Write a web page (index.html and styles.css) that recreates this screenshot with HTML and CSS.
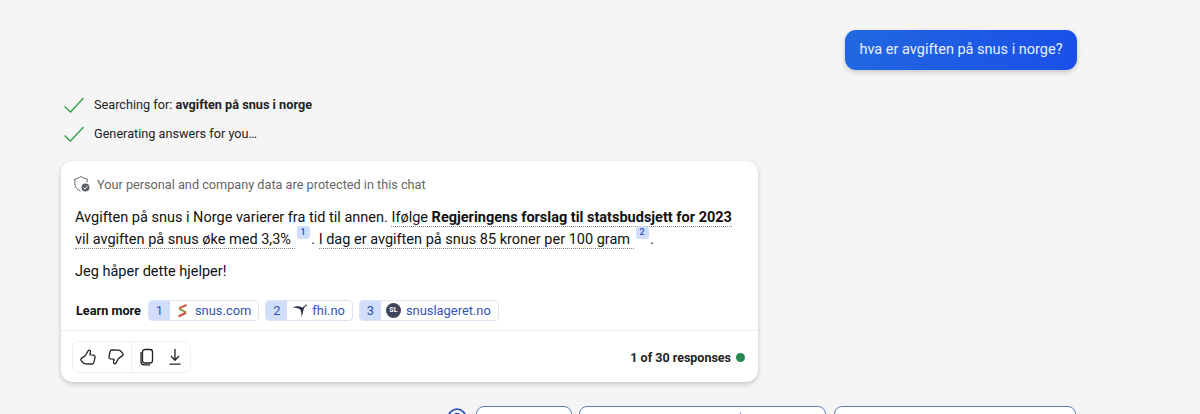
FILE: index.html
```html
<!DOCTYPE html>
<html>
<head>
    <title>Chat</title>
    <link rel="stylesheet" href="styles.css">
</head>
<body>
    <div class="chat">
        <div class="user-row">
            <div class="bubble">hva er avgiften på snus i norge?</div>
        </div>

        <div class="status">
            <svg class="check" viewBox="0 0 22 16"><path d="M1.5 9.5 L7.5 15 L20.5 1"/></svg>
            <span>Searching for: <b>avgiften på snus i norge</b></span>
        </div>
        <div class="status">
            <svg class="check" viewBox="0 0 22 16"><path d="M1.5 9.5 L7.5 15 L20.5 1"/></svg>
            <span>Generating answers for you…</span>
        </div>

        <div class="card">
            <div class="privacy">
                <svg class="shield" viewBox="0 0 18 18">
                    <path class="shield-line" d="M8 1.5 C6 3 4 3.8 1.8 4 V8.5 C1.8 12 4 14.6 7.5 16"/>
                    <path class="shield-line" d="M8 1.5 C10 3 12 3.8 14.2 4 V7.5"/>
                    <circle class="shield-dot" cx="12.5" cy="12.5" r="4.5"/>
                    <path class="shield-tick" d="M10.5 12.6 L12 14 L14.5 11.2"/>
                </svg>
                <span>Your personal and company data are protected in this chat</span>
            </div>

            <p class="answer">Avgiften på snus i Norge varierer fra tid til annen. <span class="cited">Ifølge <b>Regjeringens forslag til statsbudsjett for 2023</b> vil avgiften på snus øke med 3,3%&nbsp;</span><sup class="ref">1</sup> . <span class="cited">I dag er avgiften på snus 85 kroner per 100 gram&nbsp;</span><sup class="ref">2</sup> .</p>
            <p class="answer closing">Jeg håper dette hjelper!</p>

            <div class="learn">
                <b class="learn-label">Learn more</b>
                <a class="source">
                    <span class="num">1</span>
                    <span class="site">
                        <svg class="favicon" viewBox="0 0 14 16">
                            <path d="M11 2 L3.5 5.2" fill="none" stroke="#d0603f" stroke-width="2.2"/>
                            <path d="M3.5 5.6 L10.5 9.4" fill="none" stroke="#9a9c4c" stroke-width="2.2"/>
                            <path d="M10.5 9.8 L3 13.6" fill="none" stroke="#c4543f" stroke-width="2.2"/>
                        </svg>
                        snus.com
                    </span>
                </a>
                <a class="source">
                    <span class="num">2</span>
                    <span class="site">
                        <svg class="favicon wide" viewBox="0 0 16 14">
                            <path d="M0.5 3.5 C4 1.5 8 1.5 11 3.5 C12 2.5 13 1.5 14 1 L14.5 2 C13 3.5 12.5 5 12 7 C11.5 9.5 11 11.5 10 13.5 C10.2 10 10 7 8.5 5 C6.5 3.8 3.5 3.2 0.5 3.5 Z" fill="#2b3245"/>
                            <circle cx="15" cy="0.9" r="0.9" fill="#2b3245"/>
                        </svg>
                        fhi.no
                    </span>
                </a>
                <a class="source">
                    <span class="num">3</span>
                    <span class="site">
                        <span class="sl-logo">SL</span>
                        snuslageret.no
                    </span>
                </a>
            </div>

            <div class="card-foot">
                <div class="actions">
                    <div class="action-group">
                        <svg class="act" viewBox="0 0 18 18"><path d="M6.5 7.5 L9 3 C9.5 1.6 11.6 1.9 11.4 3.6 L11 6.8 L14.6 7.2 C15.8 7.4 16.2 8.4 16 9.4 L15 14.2 C14.8 15.4 13.8 16 12.8 16 L6.5 15.8 C5.4 15.7 4.8 15.4 4.2 14.8 L2.2 12.6 C1.6 12 1.6 11.2 2.2 10.6 Z"/></svg>
                        <svg class="act" viewBox="0 0 18 18"><path d="M11.5 10.5 L9 15 C8.5 16.4 6.4 16.1 6.6 14.4 L7 11.2 L3.4 10.8 C2.2 10.6 1.8 9.6 2 8.6 L3 3.8 C3.2 2.6 4.2 2 5.2 2 L11.5 2.2 C12.6 2.3 13.2 2.6 13.8 3.2 L15.8 5.4 C16.4 6 16.4 6.8 15.8 7.4 Z"/></svg>
                    </div>
                    <div class="action-group">
                        <svg class="act" viewBox="0 0 18 18"><rect x="4.5" y="1.5" width="10" height="13.5" rx="2.5"/><path d="M3 4 V14 C3 15.6 4.4 16.8 6 16.8 H12"/></svg>
                        <svg class="act" viewBox="0 0 18 18"><path d="M9 1 V12 M5 8 L9 12.2 L13 8 M3.5 16.2 H14.5"/></svg>
                    </div>
                </div>
                <div class="responses">1 of 30 responses <span class="dot"></span></div>
            </div>
        </div>

        <div class="suggestions">
            <svg class="help" viewBox="0 0 20 20"><circle cx="10" cy="10" r="8.8"/><path d="M7.6 7.8 C7.8 6.2 9 5.6 10.1 5.6 C11.5 5.6 12.5 6.5 12.5 7.7 C12.5 9.4 10.1 9.5 10.1 11.4"/><circle class="help-dot" cx="10.1" cy="14" r="1"/></svg>
            <button class="pill first"></button>
            <button class="pill second"></button>
            <button class="pill third"></button>
        </div>
    </div>
</body>
</html>
```

FILE: styles.css
```css
html, body {
    margin: 0;
    height: 414px;
    overflow: hidden;
}

body {
    background: #f5f5f5;
    font-family: Roboto, Arial, sans-serif;
    color: #111;
}

.chat {
    width: 1016px;
    margin-left: 61px;
    padding-top: 30px;
}

.user-row {
    display: flex;
    justify-content: flex-end;
    margin-bottom: 20px;
}

.bubble {
    box-sizing: border-box;
    height: 40px;
    width: 232px;
    padding-top: 11px;
    text-align: center;
    border-radius: 11px;
    background: linear-gradient(100deg, #2168e0, #1a4fe8);
    box-shadow: 0 2px 5px rgba(0,0,0,0.2);
    color: #e8f0ff;
    font-size: 14.5px;
    line-height: 18px;
}

.status {
    display: flex;
    align-items: center;
    height: 29px;
    font-size: 12.7px;
    color: #222;
}

.check {
    width: 22px;
    height: 16px;
    margin: 1px 9px 0 2px;
    fill: none;
    stroke: #2e9e50;
    stroke-width: 1.3;
}

.card {
    box-sizing: border-box;
    width: 697px;
    height: 221px;
    margin-top: 13px;
    background: #fff;
    border-radius: 12px;
    box-shadow: 0 2px 5px rgba(0,0,0,0.2);
}

.privacy {
    display: flex;
    align-items: center;
    height: 18px;
    padding: 14px 0 0 12px;
    font-size: 12.7px;
    color: #666;
}

.shield {
    width: 18px;
    height: 18px;
    margin-right: 6px;
}

.shield-line {
    fill: none;
    stroke: #666;
    stroke-width: 1;
}

.shield-dot {
    fill: #5c5f66;
    stroke: #fff;
    stroke-width: 1;
}

.shield-tick {
    fill: none;
    stroke: #fff;
    stroke-width: 1;
}

.answer {
    margin: 0 14px;
    font-size: 14.5px;
    line-height: 22px;
    color: #111;
}

.answer:first-of-type {
    margin-top: 14px;
}

.closing {
    margin-top: 10px;
}

.cited {
    border-bottom: 1px dotted #888;
}

.ref {
    display: inline-block;
    box-sizing: border-box;
    min-width: 13px;
    height: 13px;
    line-height: 13px;
    margin: -3px -2px 0 2px;
    text-align: center;
    vertical-align: top;
    border-radius: 3px;
    background: #cfdefb;
    color: #2450c8;
    font-size: 9px;
    font-weight: 500;
}

.learn {
    display: flex;
    align-items: center;
    gap: 6px;
    margin: 17px 0 0 15px;
    font-size: 12.9px;
}

.learn-label {
    margin-right: 1px;
    font-size: 12.7px;
    color: #111;
}

.source {
    display: flex;
    height: 21px;
    box-sizing: border-box;
    border: 1px solid #dfe4f2;
    border-radius: 4px;
    overflow: hidden;
    color: #2f55b5;
}

.num {
    display: flex;
    align-items: center;
    justify-content: center;
    width: 21px;
    background: #d0def9;
}

.site {
    display: flex;
    align-items: center;
    gap: 5px;
    padding: 0 7px 0 5px;
}

.favicon {
    width: 15px;
    height: 16px;
}

.favicon.wide {
    width: 15px;
    height: 14px;
}

.sl-logo {
    width: 15px;
    height: 15px;
    border-radius: 50%;
    background: #3f4458;
    color: #fff;
    font-size: 7px;
    font-weight: 700;
    line-height: 15px;
    text-align: center;
}

.card-foot {
    display: flex;
    align-items: center;
    justify-content: space-between;
    height: 52px;
    margin-top: 9px;
    padding: 0 13px 0 11px;
    border-top: 1px solid #ececec;
}

.actions {
    display: flex;
    height: 30px;
    border: 1px solid #eeeeee;
    border-radius: 7px;
}

.action-group {
    display: flex;
    align-items: center;
    gap: 10px;
    padding: 0 6px;
}

.action-group + .action-group {
    border-left: 1px solid #eeeeee;
}

.act {
    width: 18px;
    height: 18px;
    fill: none;
    stroke: #222;
    stroke-width: 1.3;
}

.responses {
    display: flex;
    align-items: center;
    gap: 5px;
    font-size: 12.5px;
    font-weight: 700;
    color: #222;
}

.dot {
    width: 9px;
    height: 9px;
    border-radius: 50%;
    background: #26864f;
}

/* the row is cut off by the bottom of the window */
.suggestions {
    display: flex;
    align-items: flex-start;
    height: 8px;
    overflow: hidden;
    margin: 24px 0 0 386px;
}

.help {
    flex: none;
    width: 20px;
    height: 20px;
    margin-top: 2px;
    fill: none;
    stroke: #2a55c0;
    stroke-width: 1.8;
}

.help-dot {
    fill: #2a55c0;
    stroke: none;
}

.pill {
    box-sizing: border-box;
    flex: none;
    height: 40px;
    padding: 0;
    background: #fff;
    border: 1px solid #5e7dbd;
    border-radius: 8px;
}

.first {
    width: 96px;
    margin-left: 9px;
}

.second {
    position: relative;
    width: 247px;
    margin-left: 7px;
}

/* tip of a letter from the label, only this much is in view */
.second::after {
    content: "";
    position: absolute;
    left: 160px;
    top: 5px;
    width: 1px;
    height: 3px;
    background: #8a9cc7;
}

.third {
    width: 242px;
    margin-left: 8px;
}
```
